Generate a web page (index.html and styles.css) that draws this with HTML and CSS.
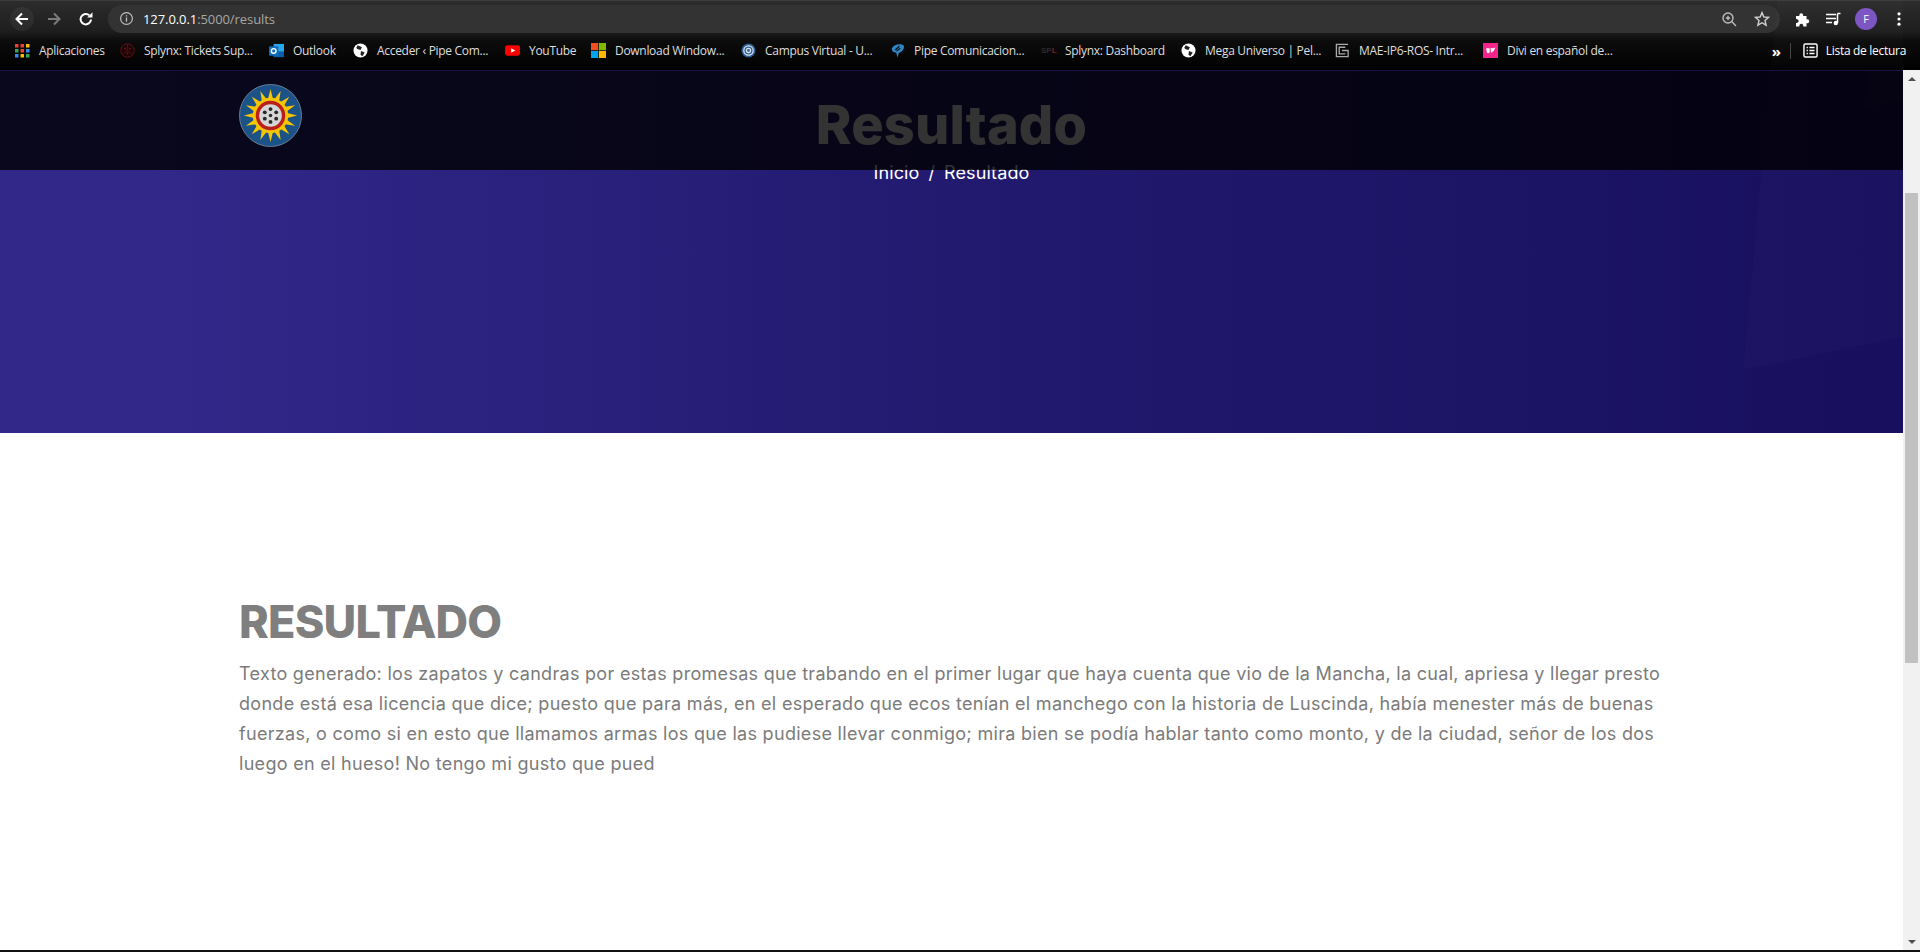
FILE: index.html
```html
<!DOCTYPE html>
<html lang="es">
<head>
<meta charset="utf-8">
<title>Resultado</title>
<link rel="stylesheet" href="styles.css">
</head>
<body>
<div class="chrome">
  <div class="toolbar">
    <div class="nav">
      <span class="nav-btn nav-btn-active"><svg viewBox="0 0 16 16" class="ic16"><path d="M14 8H3M8 2.5 2.5 8 8 13.5" fill="none" stroke="#fff" stroke-width="2"/></svg></span>
      <span class="nav-btn"><svg viewBox="0 0 16 16" class="ic16"><path d="M2 8h11M8 2.5 13.5 8 8 13.5" fill="none" stroke="#7b7b7b" stroke-width="2"/></svg></span>
      <span class="nav-btn"><svg viewBox="0 0 16 16" class="ic16"><path d="M13 8.500A5.200 5.200 0 1 1 11.400 4.400" fill="none" stroke="#fff" stroke-width="2"/><path d="M9.200 6.600h5.300V1.300z" fill="#fff"/></svg></span>
    </div>
    <div class="omnibox">
      <svg viewBox="0 0 16 16" class="ic-info"><circle cx="8" cy="8" r="6.300" fill="none" stroke="#bdbdbd" stroke-width="1.300"/><path d="M8 7v4.400M8 4.400v1.500" stroke="#bdbdbd" stroke-width="1.400"/></svg>
      <span class="url"><span class="url-host">127.0.0.1</span>:5000/results</span>
      <span class="omni-right">
        <svg viewBox="0 0 16 16" class="ic16"><circle cx="7" cy="7" r="5" fill="none" stroke="#bcbcbc" stroke-width="1.400"/><path d="M10.600 10.600 15 15M7 4.800v4.400M4.800 7h4.400" stroke="#bcbcbc" stroke-width="1.400"/></svg>
        <svg viewBox="0 0 16 16" class="ic16"><path d="M8 1.600l1.900 4.400 4.700.4-3.600 3.100 1.100 4.700L8 11.700l-4.100 2.500L5 9.500 1.400 6.400l4.700-.4z" fill="none" stroke="#cfcfcf" stroke-width="1.400"/></svg>
      </span>
    </div>
    <div class="tools">
      <svg viewBox="0 0 16 16" class="ic16"><path d="M1 5h3.400a2 2 0 1 1 3.700 0h3.400v3.400a2 2 0 1 1 0 3.700V15.500H8.200a2 2 0 1 0-3.700 0H1v-3.600a2 2 0 1 0 0-3.800z" fill="#fff"/></svg>
      <svg viewBox="0 0 16 16" class="ic16"><path d="M1 3.500h10M1 7.500h10M1 11.500h6" stroke="#fff" stroke-width="1.500"/><path d="M12.500 2.500h3M12.500 2.500v9.500" stroke="#fff" stroke-width="1.500" fill="none"/><circle cx="10.800" cy="12" r="2.200" fill="#fff"/></svg>
      <span class="avatar">F</span>
      <svg viewBox="0 0 16 16" class="ic16"><circle cx="8" cy="2.800" r="1.600" fill="#fff"/><circle cx="8" cy="8" r="1.600" fill="#fff"/><circle cx="8" cy="13.200" r="1.600" fill="#fff"/></svg>
    </div>
  </div>
  <div class="bookmarks">
    <span class="bm bm-apps"><svg viewBox="0 0 15 15" class="fav"><g fill="#ea4335"><rect x="0" y="1" width="3.500" height="3.500"/><rect x="5.500" y="1" width="3.500" height="3.500"/></g><rect x="11" y="1" width="3.500" height="3.500" fill="#fbbc05"/><g fill="#34a853"><rect x="0" y="6" width="3.500" height="3.500"/></g><rect x="5.500" y="6" width="3.500" height="3.500" fill="#ea4335"/><rect x="11" y="6" width="3.500" height="3.500" fill="#4285f4"/><rect x="0" y="11" width="3.500" height="3.500" fill="#4285f4"/><rect x="5.500" y="11" width="3.500" height="3.500" fill="#fbbc05"/><rect x="11" y="11" width="3.500" height="3.500" fill="#34a853"/></svg>Aplicaciones</span>
    <span class="bm bm-splynx"><svg viewBox="0 0 16 16" class="fav"><circle cx="8" cy="8" r="7.200" fill="#1c0507" stroke="#6d0f13" stroke-width="1"/><path d="M8 1v7M8 8l-5 4M8 8l5 4" stroke="#6d0f13" stroke-width=".8"/><circle cx="5.500" cy="6" r="1.100" fill="#6d0f13"/><circle cx="10.500" cy="6" r="1.100" fill="#6d0f13"/><circle cx="8" cy="11" r="1.100" fill="#6d0f13"/></svg>Splynx: Tickets Sup...</span>
    <span class="bm bm-outlook"><svg viewBox="0 0 16 16" class="fav"><rect x="5" y="1" width="11" height="14" fill="#28a8ea"/><rect x="5" y="9" width="11" height="6" fill="#0a5ea8"/><rect x="0" y="3.500" width="10" height="10" rx="1" fill="#0f6cbd"/><circle cx="5" cy="8.500" r="2.500" fill="none" stroke="#fff" stroke-width="1.500"/></svg>Outlook</span>
    <span class="bm bm-acceder"><svg viewBox="0 0 16 16" class="fav"><circle cx="8" cy="8" r="7.500" fill="#fff"/><path d="M5 2.500 9.500 4.500 8 7.500 4.500 6.500 3.500 5zM8.500 8.500l4 1.500-2.500 4-2-1.500z" fill="#222"/></svg>Acceder ‹ Pipe Com...</span>
    <span class="bm bm-yt"><svg viewBox="0 0 16 16" class="fav"><rect x="0" y="2.500" width="16" height="11" rx="3" fill="#f00"/><path d="M6.500 5.500v5L11 8z" fill="#fff"/></svg>YouTube</span>
    <span class="bm bm-win"><svg viewBox="0 0 16 16" class="fav"><rect x="0" y="0" width="7.600" height="7.600" fill="#f25022"/><rect x="8.400" y="0" width="7.600" height="7.600" fill="#7fba00"/><rect x="0" y="8.400" width="7.600" height="7.600" fill="#00a4ef"/><rect x="8.400" y="8.400" width="7.600" height="7.600" fill="#ffb900"/></svg>Download Window...</span>
    <span class="bm bm-campus"><svg viewBox="0 0 16 16" class="fav"><circle cx="8" cy="8" r="7.500" fill="#2f5f92"/><circle cx="8" cy="8" r="5" fill="none" stroke="#dce8f2" stroke-width="1.300"/><circle cx="8" cy="8" r="2.200" fill="none" stroke="#dce8f2" stroke-width="1.300"/></svg>Campus Virtual - U...</span>
    <span class="bm bm-pipe"><svg viewBox="0 0 16 16" class="fav"><path d="M2 5.500C4 1.500 11 0 14.500 2.500 16 6 13 10 9.500 10.500L8 15.500 6.500 10C4 10 1.500 8.500 2 5.500z" fill="#2d86c4"/><path d="M5.500 7.500 10 3.500M7 8.500l4-3" stroke="#0b0b0b" stroke-width="1.200"/></svg>Pipe Comunicacion...</span>
    <span class="bm bm-spl"><span class="fav fav-spl">SP<span class="fav-spl-l">L</span></span>Splynx: Dashboard</span>
    <span class="bm bm-mega"><svg viewBox="0 0 16 16" class="fav"><circle cx="8" cy="8" r="7.500" fill="#fff"/><path d="M5 2.500 9.500 4.500 8 7.500 4.500 6.500 3.500 5zM8.500 8.500l4 1.500-2.500 4-2-1.500z" fill="#222"/></svg>Mega Universo | Pel...</span>
    <span class="bm bm-mae"><svg viewBox="0 0 16 16" class="fav"><path d="M14 1.500H1.500v13H14V8H7.500M11 4.500H4.500v7H11" fill="none" stroke="#a9a9a9" stroke-width="1.400"/></svg>MAE-IP6-ROS- Intr...</span>
    <span class="bm bm-divi"><svg viewBox="0 0 16 16" class="fav"><rect width="16" height="16" fill="#f5248c"/><path d="M3.500 5.500h3.500c0 3 .5 5-1 5.500-2 0-2.500-3-2.500-5.500zM8 5c2 1 4 .5 5-.5-.5 3-2 5-4.500 6z" fill="#fff"/></svg>Divi en español de...</span>
    <span class="bm-right">
      <span class="chev">»</span>
      <span class="bm-sep"></span>
      <svg viewBox="0 0 16 16" class="fav"><rect x="1" y="1" width="14" height="14" rx="1.500" fill="none" stroke="#fff" stroke-width="1.500"/><path d="M3.800 4.800h1.400M3.800 8h1.400M3.800 11.200h1.400M6.800 4.800h5.500M6.800 8h5.500M6.800 11.200h5.500" stroke="#fff" stroke-width="1.400"/></svg>
      <span class="reading">Lista de lectura</span>
    </span>
  </div>
</div>
<div class="viewport">
  <div class="page">
    <header class="site-header">
      <svg viewBox="0 0 64 64" class="logo">
        <circle cx="32" cy="32" r="31.500" fill="#1b5288" stroke="#6d7d92" stroke-width="1"/>
        <g fill="#f7c600">
          <path d="M29.500 15 32 5 34.500 15z"/>
          <path d="M29.500 15 32 5 34.500 15z" transform="rotate(22.500 32 32)"/>
          <path d="M29.500 15 32 5 34.500 15z" transform="rotate(45 32 32)"/>
          <path d="M29.500 15 32 5 34.500 15z" transform="rotate(67.500 32 32)"/>
          <path d="M29.500 15 32 5 34.500 15z" transform="rotate(90 32 32)"/>
          <path d="M29.500 15 32 5 34.500 15z" transform="rotate(112.500 32 32)"/>
          <path d="M29.500 15 32 5 34.500 15z" transform="rotate(135 32 32)"/>
          <path d="M29.500 15 32 5 34.500 15z" transform="rotate(157.500 32 32)"/>
          <path d="M29.500 15 32 5 34.500 15z" transform="rotate(180 32 32)"/>
          <path d="M29.500 15 32 5 34.500 15z" transform="rotate(202.500 32 32)"/>
          <path d="M29.500 15 32 5 34.500 15z" transform="rotate(225 32 32)"/>
          <path d="M29.500 15 32 5 34.500 15z" transform="rotate(247.500 32 32)"/>
          <path d="M29.500 15 32 5 34.500 15z" transform="rotate(270 32 32)"/>
          <path d="M29.500 15 32 5 34.500 15z" transform="rotate(292.500 32 32)"/>
          <path d="M29.500 15 32 5 34.500 15z" transform="rotate(315 32 32)"/>
          <path d="M29.500 15 32 5 34.500 15z" transform="rotate(337.500 32 32)"/>
          <circle cx="32" cy="32" r="18"/>
        </g>
        <circle cx="32" cy="32" r="15" fill="#bb1f1a"/>
        <circle cx="32" cy="32" r="11.500" fill="#d6d6d6"/>
        <g fill="#2a2a2a">
          <circle cx="32" cy="25.500" r="2"/><circle cx="37.800" cy="28.800" r="2"/><circle cx="37.800" cy="35.200" r="2"/>
          <circle cx="32" cy="38.500" r="2"/><circle cx="26.200" cy="35.200" r="2"/><circle cx="26.200" cy="28.800" r="2"/>
          <circle cx="32" cy="32" r="1.800"/>
        </g>
      </svg>
    </header>
    <section class="hero">
      <svg class="hero-shapes" viewBox="0 0 1903 363" preserveAspectRatio="none">
        <path d="M1780 -100 1743 300 1903 267V-100z" fill="#fff" opacity=".016"/>
        <path d="M1868 0 1865 37 1903 30V0z" fill="#fff" opacity=".016"/>
      </svg>
      <h1 class="hero-title">Resultado</h1>
      <p class="crumbs"><span>Inicio</span><span class="crumb-sep">/</span><span>Resultado</span></p>
    </section>
    <main class="content">
      <h2 class="result-title">RESULTADO</h2>
      <p class="result-text">Texto generado: los zapatos y candras por estas promesas que trabando en el primer lugar que haya cuenta que vio de la Mancha, la cual, apriesa y llegar presto<br>donde está esa licencia que dice; puesto que para más, en el esperado que ecos tenían el manchego con la historia de Luscinda, había menester más de buenas<br>fuerzas, o como si en esto que llamamos armas los que las pudiese llevar conmigo; mira bien se podía hablar tanto como monto, y de la ciudad, señor de los dos<br>luego en el hueso! No tengo mi gusto que pued</p>
    </main>
  </div>
  <div class="scrollbar">
    <span class="arrow-up"></span>
    <div class="track"><div class="thumb"></div></div>
    <span class="arrow-down"></span>
  </div>
</div>
<div class="taskbar-edge"></div>
</body>
</html>
```
FILE: styles.css
```css
* { box-sizing: border-box; }
html, body { margin: 0; height: 952px; overflow: hidden; }
body { display: flex; flex-direction: column; background: #000; font-family: "Inter", "Liberation Sans", sans-serif; }

.chrome { height: 70px; flex: none; background: linear-gradient(#2c2c2c 0, #1e1e1e 30px, #0c0c0c 40px, #000 70px); border-top: 1px solid #3c3c3c; }
.toolbar { height: 32px; display: flex; align-items: center; padding: 3px 12px 0 10px; }
.ic16 { width: 16px; height: 16px; flex: none; display: block; }
.nav { display: flex; gap: 8px; width: 98px; flex: none; }
.nav-btn { width: 24px; height: 24px; display: flex; align-items: center; justify-content: center; border-radius: 50%; }
.nav-btn-active { background: rgba(255,255,255,.05); }
.omnibox { flex: none; width: 1672px; height: 28px; background: #333; border-radius: 14px; display: flex; align-items: center; padding: 0 10px 0 11px; }
.ic-info { width: 15px; height: 15px; flex: none; }
.url { font: 13px "Open Sans", "Liberation Sans", sans-serif; color: #a6a6a6; margin-left: 9px; letter-spacing: -.08px; }
.url-host { color: #fff; }
.omni-right { margin-left: auto; display: flex; gap: 17px; }
.tools { display: flex; align-items: center; gap: 14px; margin-left: 15px; }
.avatar { width: 22px; height: 22px; border-radius: 50%; background: #7c54c4; color: #fff; font: 11px "Open Sans", sans-serif; display: flex; align-items: center; justify-content: center; }

.bookmarks { height: 37px; display: flex; align-items: center; padding: 0 14px 2px 15px; position: relative; color: #dedede; font: 12px "Open Sans", "Liberation Sans", sans-serif; letter-spacing: -.3px; white-space: nowrap; }
.bm { display: flex; align-items: center; gap: 9px; flex: none; }
.fav { width: 15px; height: 15px; flex: none; display: block; }
.fav-spl { font: 700 8px "Liberation Sans", sans-serif; letter-spacing: 0; color: #2b2b2b; line-height: 15px; width: 15px; }
.fav-spl-l { color: #8d1a1f; }
.bm-apps { width: 105px; }
.bm-splynx { width: 149px; }
.bm-outlook { width: 84px; }
.bm-acceder { width: 152px; }
.bm-yt { width: 86px; }
.bm-win { width: 150px; }
.bm-campus { width: 149px; }
.bm-pipe { width: 151px; }
.bm-spl { width: 140px; }
.bm-mega { width: 154px; }
.bm-mae { width: 148px; }
.bm-divi { width: 140px; }
.bm-right { margin-left: auto; display: flex; align-items: center; }
.chev { font-weight: 700; font-size: 15px; width: 18px; color: #fff; }
.bm-sep { width: 1px; height: 16px; background: #444; margin-right: 12px; }
.reading { color: #fff; margin-left: 8px; }

.viewport { flex: 1; display: flex; min-height: 0; }
.page { flex: 1; position: relative; background: #fff; min-width: 0; }
.site-header { position: absolute; top: 0; left: 0; right: 0; height: 100px; background: rgba(0,0,0,.8); z-index: 2; padding: 13px 0 0 239px; border-top: 1px solid #1a1140; }
.logo { width: 63px; height: 63px; display: block; }

.hero { height: 363px; position: relative; background: linear-gradient(90deg, #31288a 0, #31288a 8%, #221a6f 50%, #180f5e 100%); display: flex; flex-direction: column; align-items: center; color: #fff; padding-top: 23px; }
.hero-shapes { position: absolute; inset: 0; width: 100%; height: 100%; overflow: visible; }
.hero-title { margin: 0; font-size: 54px; font-weight: 800; line-height: 64px; letter-spacing: .2px; position: relative; }
.crumbs { margin: 3px 0 0; display: flex; gap: 9px; font-size: 18px; line-height: 26px; letter-spacing: .1px; position: relative; }

.content { padding: 162px 0 0 239px; color: #7b7b7b; }
.result-title { margin: 0; font-size: 45px; font-weight: 800; line-height: 54px; letter-spacing: -.8px; color: #7f7f7f; }
.result-text { margin: 10px 0 0; font-size: 18px; line-height: 30px; letter-spacing: .3px; white-space: nowrap; }

.scrollbar { width: 17px; flex: none; background: #f1f1f1; display: flex; flex-direction: column; align-items: center; }
.arrow-up, .arrow-down { width: 0; height: 0; border-left: 4px solid transparent; border-right: 4px solid transparent; flex: none; }
.arrow-up { border-bottom: 4px solid #505050; margin: 7px 0 6px; }
.arrow-down { border-top: 4px solid #505050; margin: 6px 0 6px; }
.track { flex: 1; width: 13px; padding-top: 106px; }
.thumb { height: 470px; background: #c1c1c1; }

.taskbar-edge { height: 2px; background: #111; flex: none; }
```
